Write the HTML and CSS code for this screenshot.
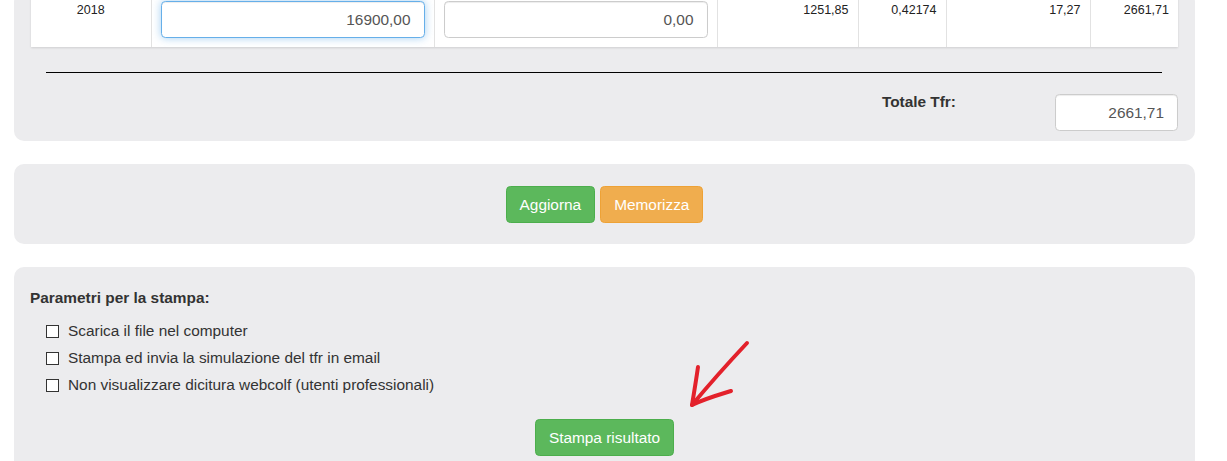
FILE: index.html
```html
<!DOCTYPE html>
<html lang="it">
<head>
  <meta charset="UTF-8">
  <meta name="viewport" content="width=device-width, initial-scale=1.0">
  <title>Calcolo Tfr</title>
  <link rel="stylesheet" href="styles.css">
</head>
<body>
  <div class="page">
    <div class="well well-table">
      <table class="tfr-table">
        <colgroup>
          <col style="width: 120px">
          <col style="width: 283px">
          <col style="width: 283px">
          <col style="width: 141px">
          <col style="width: 88px">
          <col style="width: 144px">
          <col style="width: 88px">
        </colgroup>
        <tbody>
          <tr>
            <td class="year">2018</td>
            <td class="field"><input type="text" class="form-control is-focused" value="16900,00"></td>
            <td class="field"><input type="text" class="form-control" value="0,00"></td>
            <td class="num">1251,85</td>
            <td class="num">0,42174</td>
            <td class="num">17,27</td>
            <td class="num">2661,71</td>
          </tr>
        </tbody>
      </table>
      <hr class="sep">
      <div class="total-row">
        <label for="totale">Totale Tfr:</label>
        <input type="text" id="totale" class="form-control total" value="2661,71" readonly>
      </div>
    </div>

    <div class="well actions">
      <button class="btn btn-success">Aggiorna</button>
      <button class="btn btn-warning">Memorizza</button>
    </div>

    <div class="well print">
      <h4 class="print-title">Parametri per la stampa:</h4>
      <label class="check"><input type="checkbox"> Scarica il file nel computer</label>
      <label class="check"><input type="checkbox"> Stampa ed invia la simulazione del tfr in email</label>
      <label class="check"><input type="checkbox"> Non visualizzare dicitura webcolf (utenti professionali)</label>
      <div class="print-actions">
        <button class="btn btn-success">Stampa risultato</button>
      </div>
      <svg class="arrow" width="90" height="80" viewBox="0 0 90 80">
        <path d="M63 6 C48 22 28 44 8 68" fill="none" stroke="#e3212b" stroke-width="4" stroke-linecap="round"/>
        <path d="M14 30 C12 44 10 56 8 68 C20 62 34 58 47 54" fill="none" stroke="#e3212b" stroke-width="4" stroke-linecap="round" stroke-linejoin="round"/>
      </svg>
    </div>
  </div>
</body>
</html>
```

FILE: styles.css
```css
body {
  font-family: 'Liberation Sans', Arial, sans-serif;
  font-size: 15.4px;
  line-height: 22px;
  margin: 0;
  color: #333;
  background-color: #fff;
}
.page {
  width: 1181px;
  margin: -8px 0 0 14px;
}
.well {
  background-color: #ececee;
  border-radius: 10px;
  margin-bottom: 23px;
}
.well-table {
  padding: 0 17px 10px;
}
.tfr-table {
  width: 100%;
  table-layout: fixed;
  border-collapse: collapse;
  background-color: #fff;
  box-shadow: 0 1px 2px rgba(0, 0, 0, 0.12);
  font-size: 12.5px;
  line-height: 18px;
  color: #222;
}
.tfr-table td {
  padding: 9px;
  vertical-align: top;
  border-left: 1px solid #e2e2e2;
}
.tfr-table td:first-child {
  border-left: none;
}
.tfr-table .year {
  text-align: center;
}
.tfr-table .num {
  text-align: right;
}
.form-control {
  display: block;
  width: 100%;
  height: 37px;
  padding: 6px 13px;
  box-sizing: border-box;
  font-family: inherit;
  font-size: 15.4px;
  color: #555;
  text-align: right;
  background-color: #fff;
  border: 1px solid #ccc;
  border-radius: 4.4px;
  box-shadow: inset 0 1px 1px rgba(0, 0, 0, 0.075);
  outline: none;
}
.form-control.is-focused {
  border-color: #66afe9;
  box-shadow: inset 0 1px 1px rgba(0, 0, 0, 0.075), 0 0 8px rgba(102, 175, 233, 0.6);
}
.sep {
  border: none;
  border-top: 1px solid #000;
  margin: 25px 16px 21px 15px;
}
.total-row {
  display: flex;
  justify-content: flex-end;
  align-items: flex-start;
}
.total-row label {
  font-weight: bold;
  margin-top: -3px;
}
.form-control.total {
  width: 123px;
  margin-left: 99px;
}
.actions {
  display: flex;
  justify-content: center;
  gap: 5px;
  padding: 22px 0 21px;
}
.btn {
  font-family: inherit;
  font-size: 15.4px;
  line-height: 22px;
  padding: 6.5px 13px;
  color: #fff;
  border: 1px solid transparent;
  border-radius: 4.4px;
  cursor: pointer;
}
.btn-success {
  background-color: #5cb85c;
  border-color: #4cae4c;
}
.btn-warning {
  background-color: #f0ad4e;
  border-color: #eea236;
}
.print {
  position: relative;
  padding: 20px 16px 20px;
}
.print-title {
  font-size: 15.4px;
  line-height: 22px;
  font-weight: bold;
  margin: 0 0 8.5px;
}
.check {
  display: flex;
  align-items: center;
  height: 27px;
  padding-left: 16px;
}
.check input {
  appearance: none;
  width: 13px;
  height: 13px;
  margin: 0 9px 0 0;
  border: 1px solid #333;
  background-color: #fff;
}
.print-actions {
  text-align: center;
  margin-top: 20.5px;
}
.arrow {
  position: absolute;
  left: 670px;
  top: 70px;
}
```
